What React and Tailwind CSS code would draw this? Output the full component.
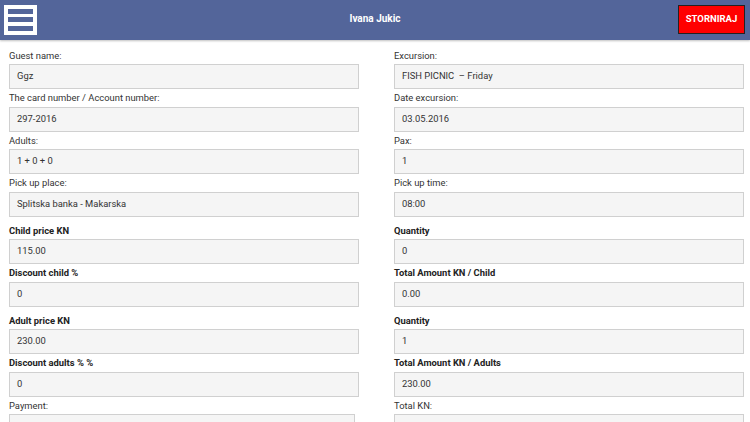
import React from "react";

const left = [
  { label: "Guest name:", value: "Ggz" },
  { label: "The card number / Account number:", value: "297-2016" },
  { label: "Adults:", value: "1 + 0 + 0" },
  { label: "Pick up place:", value: "Splitska banka - Makarska" },
  { label: "Child price KN", value: "115.00", bold: true, gapTop: true },
  { label: "Discount child %", value: "0", bold: true },
  { label: "Adult price KN", value: "230.00", bold: true, gapTop: true },
  { label: "Discount adults % %", value: "0", bold: true },
  { label: "Payment:", value: "", narrow: true },
];

const right = [
  { label: "Excursion:", value: "FISH PICNIC  \u2013 Friday" },
  { label: "Date excursion:", value: "03.05.2016" },
  { label: "Pax:", value: "1" },
  { label: "Pick up time:", value: "08:00" },
  { label: "Quantity", value: "0", bold: true, gapTop: true },
  { label: "Total Amount KN / Child", value: "0.00", bold: true },
  { label: "Quantity", value: "1", bold: true, gapTop: true },
  { label: "Total Amount KN / Adults", value: "230.00", bold: true },
  { label: "Total KN:", value: "" },
];

function Field({ f }) {
  return (
    <div className={f.gapTop ? "pt-[5px]" : ""}>
      <div
        className={
          "h-[17.5px] leading-[17.5px] text-[9.4px] " +
          (f.bold ? "font-bold text-[#222]" : "text-[#333]")
        }
      >
        {f.label}
      </div>
      <div
        className={
          "h-[25px] bg-[#f5f5f5] border border-[#d0d0d0] flex items-center pl-[7px] text-[9.4px] text-[#333] whitespace-pre " +
          (f.narrow ? "w-[346px]" : "w-full")
        }
      >
        {f.value}
      </div>
    </div>
  );
}

export default function App() {
  return (
    <div
      className="w-[750px] h-[422px] overflow-hidden bg-white"
      style={{ fontFamily: "Roboto, 'Liberation Sans', sans-serif" }}
    >
      <header className="h-[40px] bg-[#53659a] flex items-center justify-between pl-[4px] pr-[5px] shadow-[0_1px_2px_rgba(0,0,0,0.25)] relative">
        <div className="w-[33px] h-[30px] bg-white flex flex-col justify-between px-[4px] py-[4px] mt-[-1px]">
          <div className="h-[5px] bg-[#53659a]" />
          <div className="h-[5px] bg-[#53659a]" />
          <div className="h-[5px] bg-[#53659a]" />
        </div>
        <div className="absolute left-0 right-0 top-[11px] text-center text-white font-bold text-[10px] pointer-events-none">
          Ivana Jukic
        </div>
        <button className="w-[67px] h-[29px] bg-[#ff0000] border border-[#222] text-white font-bold text-[9.5px] flex items-center justify-center mt-[-1px]">
          STORNIRAJ
        </button>
      </header>
      <div className="grid grid-cols-[350px_350px] gap-x-[35px] pl-[9px] pt-[6.5px]">
        <div className="flex flex-col">
          {left.map((f, i) => (
            <Field key={i} f={f} />
          ))}
        </div>
        <div className="flex flex-col">
          {right.map((f, i) => (
            <Field key={i} f={f} />
          ))}
        </div>
      </div>
    </div>
  );
}
